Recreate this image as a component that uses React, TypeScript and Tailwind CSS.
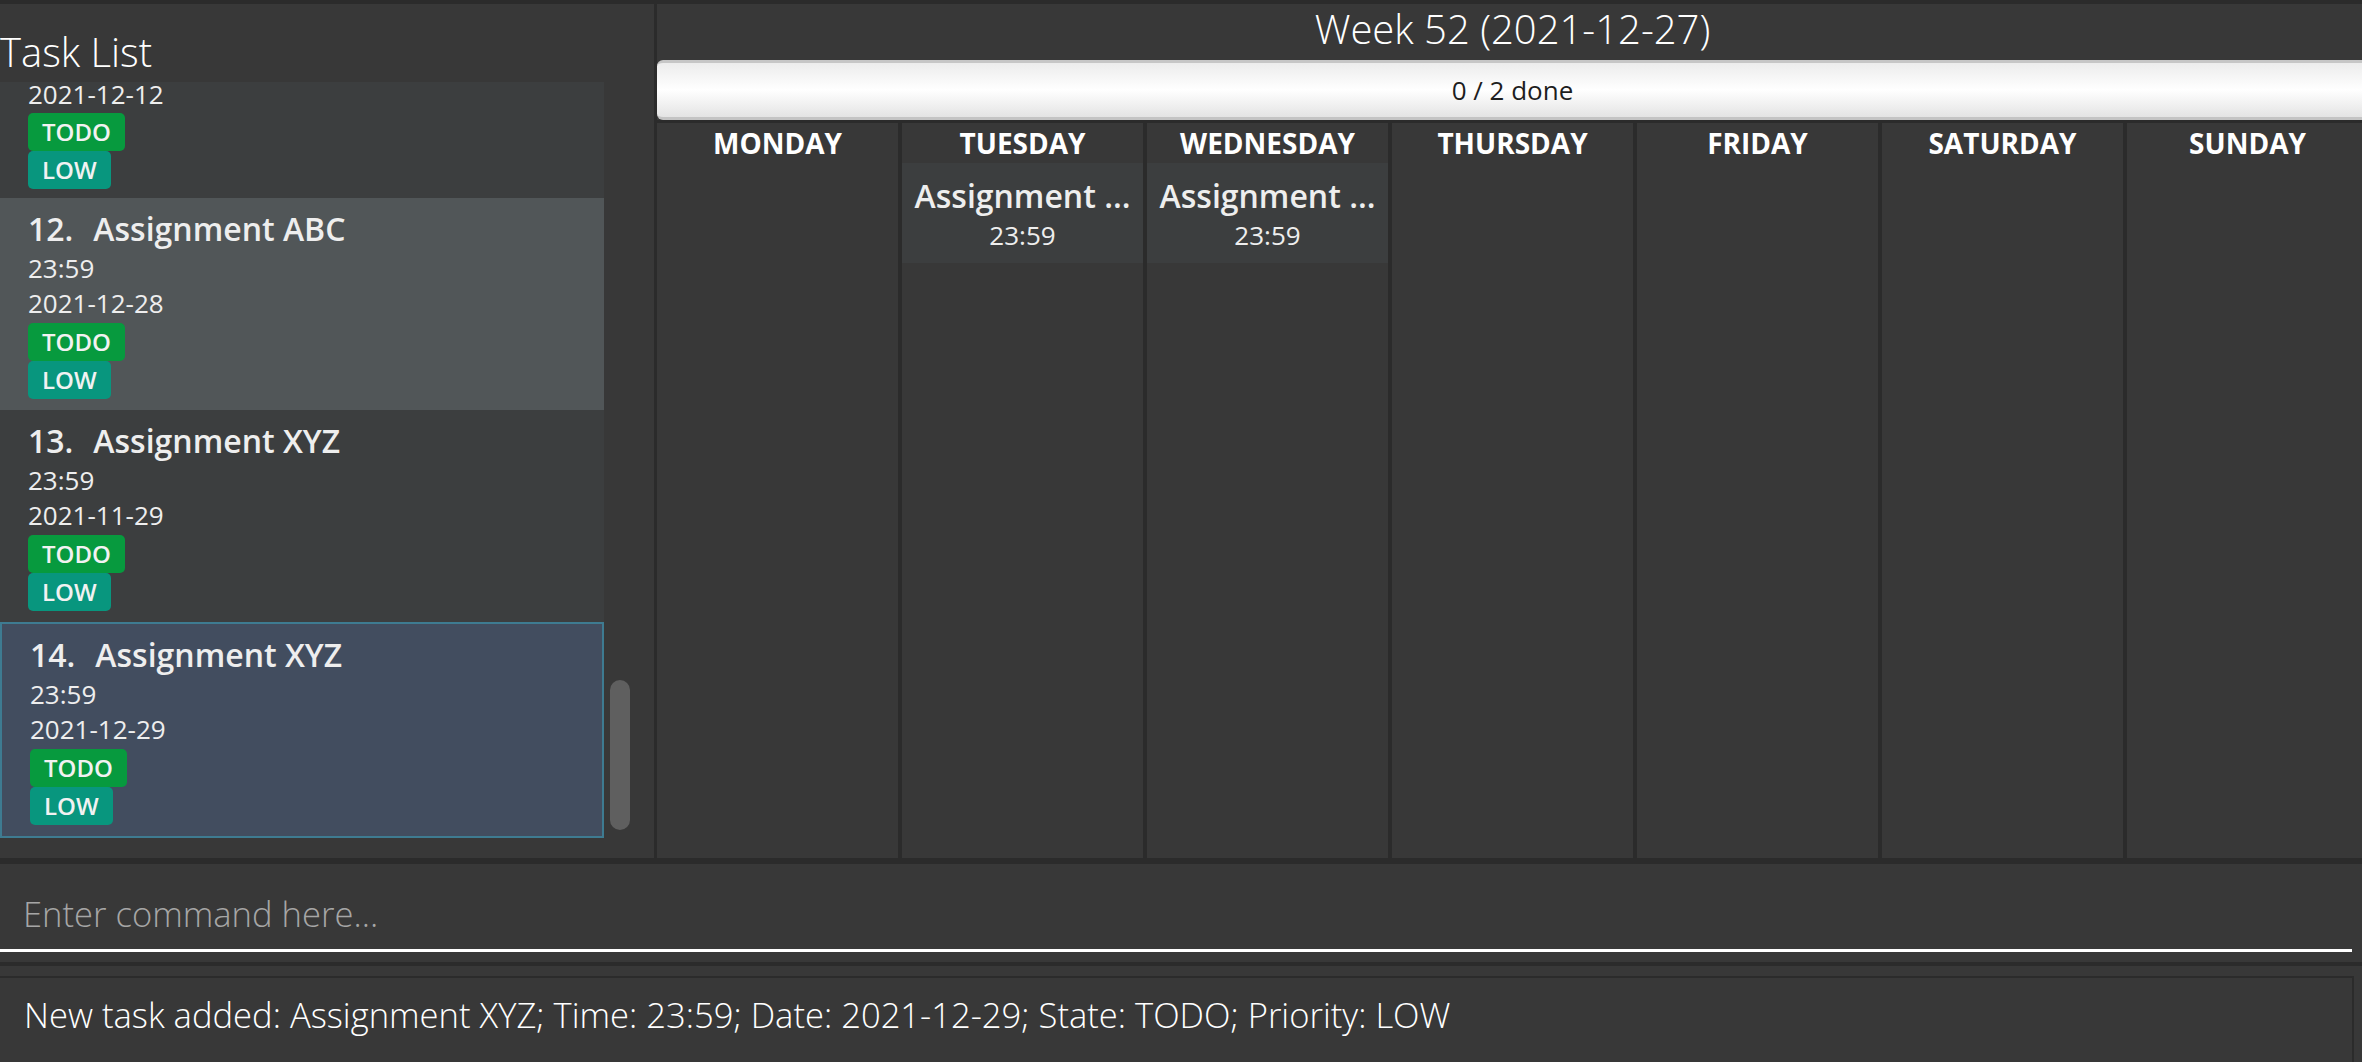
import React from 'react';

type Task = {
  id: number;
  name: string;
  time: string;
  date: string;
  state: string;
  priority: string;
};

// the list is scrolled: only the lower part of task 11 is in view
const partialTask = { date: '2021-12-12', state: 'TODO', priority: 'LOW' };

const tasks: Task[] = [
  { id: 12, name: 'Assignment ABC', time: '23:59', date: '2021-12-28', state: 'TODO', priority: 'LOW' },
  { id: 13, name: 'Assignment XYZ', time: '23:59', date: '2021-11-29', state: 'TODO', priority: 'LOW' },
  { id: 14, name: 'Assignment XYZ', time: '23:59', date: '2021-12-29', state: 'TODO', priority: 'LOW' },
];

const selectedId = 14;

const days = [
  { name: 'MONDAY', events: [] as { title: string; time: string }[] },
  { name: 'TUESDAY', events: [{ title: 'Assignment ...', time: '23:59' }] },
  { name: 'WEDNESDAY', events: [{ title: 'Assignment ...', time: '23:59' }] },
  { name: 'THURSDAY', events: [] },
  { name: 'FRIDAY', events: [] },
  { name: 'SATURDAY', events: [] },
  { name: 'SUNDAY', events: [] },
];

const Badges: React.FC<{ state: string; priority: string }> = ({ state, priority }) => (
  <div className="flex flex-col items-start">
    <span className="h-[38px] rounded-[5px] bg-[#079a3e] px-[14px] text-[24px] font-semibold leading-[38px] text-[#f2f2f2]">
      {state}
    </span>
    <span className="h-[38px] rounded-[5px] bg-[#08967e] px-[14px] text-[24px] font-semibold leading-[38px] text-[#f2f2f2]">
      {priority}
    </span>
  </div>
);

const TaskCard: React.FC<{ task: Task; index: number }> = ({ task, index }) => {
  const selected = task.id === selectedId;
  const bg = selected
    ? 'bg-[#424d5f] border-2 border-[#3e7b91]'
    : index % 2 === 0
      ? 'bg-[#515658]'
      : 'bg-[#3c3e3f]';

  return (
    <div className={`${bg} pl-[28px] pt-[9px] pb-[11px]`}>
      <div className="flex items-baseline text-[32px] font-semibold leading-[44px] text-[#eeeeee]">
        <span>{task.id}.</span>
        <span className="ml-[20px]">{task.name}</span>
      </div>
      <div className="text-[26px] leading-[35px] text-[#eeeeee]">{task.time}</div>
      <div className="text-[26px] leading-[35px] text-[#eeeeee]">{task.date}</div>
      <div className="mt-[2px]">
        <Badges state={task.state} priority={task.priority} />
      </div>
    </div>
  );
};

const TaskPanel: React.FC = () => (
  <div className="flex w-[654px] shrink-0 flex-col bg-[#383838]">
    <div className="h-[78px] pt-[21px] text-[40px] font-light leading-[54px] text-white">Task List</div>
    <div className="flex flex-1 overflow-hidden">
      <div className="w-[604px] overflow-hidden">
        <div className="h-[116px] bg-[#3c3e3f] pl-[28px]">
          <div className="text-[26px] leading-[24px] text-[#eeeeee]">{partialTask.date}</div>
          <div className="mt-[7px]">
            <Badges state={partialTask.state} priority={partialTask.priority} />
          </div>
        </div>
        {tasks.map((t, i) => (
          <TaskCard key={t.id} task={t} index={i} />
        ))}
      </div>
      <div className="flex-1 pl-[6px] pt-[598px]">
        <div className="h-[150px] w-[20px] rounded-full bg-[#5f5f5f]" />
      </div>
    </div>
  </div>
);

const WeekPanel: React.FC = () => (
  <div className="flex w-[1711px] shrink-0 flex-col bg-[#383838]">
    <div className="h-[56px] text-center text-[40px] font-light leading-[50px] text-white">
      Week 52 (2021-12-27)
    </div>
    <div className="flex h-[60px] items-center justify-center rounded-l-[6px] border-t-[3px] border-b-[3px] border-t-[#c6c6c6] border-b-[#c4c4c4] bg-gradient-to-b from-[#ececec] via-[#ffffff] to-[#e4e4e4] text-[26px] text-[#1e1e1e]">
      0 / 2 done
    </div>
    <div className="grid flex-1 grid-cols-[repeat(7,241px)] gap-x-[4px] bg-[#2b2b2b] pt-[3px]">
      {days.map((d) => (
        <div key={d.name} className="bg-[#383838]">
          <div className="h-[40px] text-center text-[28px] font-bold leading-[40px] text-white">{d.name}</div>
          {d.events.map((e, i) => (
            <div key={i} className="bg-[#3c3e3f] pt-[11px] pb-[10px] text-center text-[#eeeeee]">
              <div className="text-[32px] font-semibold leading-[44px]">{e.title}</div>
              <div className="text-[26px] leading-[35px]">{e.time}</div>
            </div>
          ))}
        </div>
      ))}
    </div>
  </div>
);

export default function App() {
  return (
    <div className="flex h-[1062px] w-[2362px] flex-col overflow-hidden bg-[#2b2b2b] pt-[4px] font-['Open_Sans',sans-serif]">
      <div className="flex h-[854px] gap-x-[3px]">
        <TaskPanel />
        <WeekPanel />
      </div>

      <div className="mt-[6px] h-[98px] bg-[#383838]">
        <input
          className="box-border h-[88px] w-[2352px] border-b-[3px] border-white bg-transparent pl-[23px] pt-[13px] text-[34.6px] font-light text-white outline-none placeholder:text-[#a6a6a6]"
          placeholder="Enter command here..."
        />
      </div>

      <div className="mt-[4px] flex-1 bg-[#383838] pt-[10px]">
        <div className="h-full w-[2354px] border-t-2 border-r-2 border-[#2b2b2b] pl-[24px] pt-[14px] text-[34.6px] font-light leading-[46px] text-white">
          New task added: Assignment XYZ; Time: 23:59; Date: 2021-12-29; State: TODO; Priority: LOW
        </div>
      </div>
    </div>
  );
}
